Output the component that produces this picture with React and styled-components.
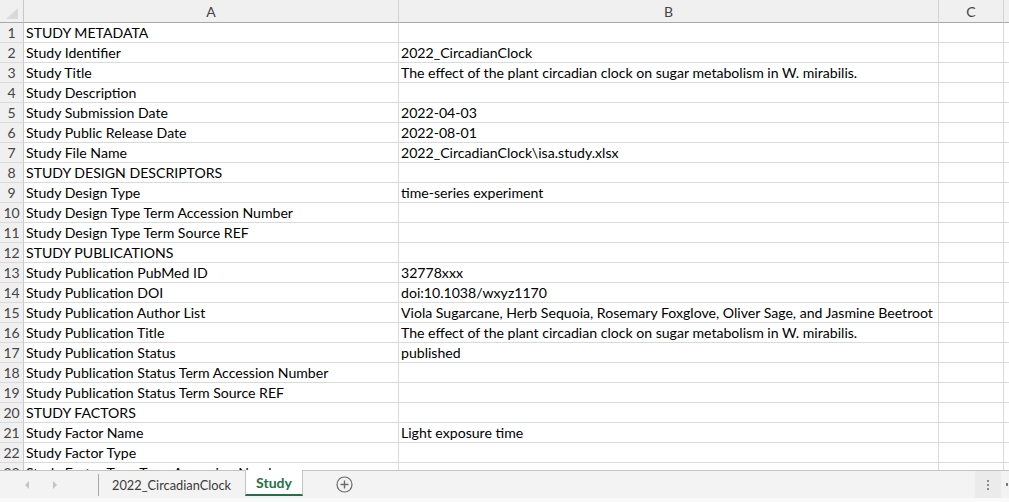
import styled, { createGlobalStyle } from 'styled-components';

const GlobalStyle = createGlobalStyle`
  html, body {
    margin: 0;
    padding: 0;
    background: #ffffff;
  }
  body {
    font-family: 'Lato', 'Liberation Sans', sans-serif;
  }
`;

const columns = ['A', 'B', 'C', ''];

const rows = [
  ['STUDY METADATA', ''],
  ['Study Identifier', '2022_CircadianClock'],
  ['Study Title', 'The effect of the plant circadian clock on sugar metabolism in W. mirabilis.'],
  ['Study Description', ''],
  ['Study Submission Date', '2022-04-03'],
  ['Study Public Release Date', '2022-08-01'],
  ['Study File Name', '2022_CircadianClock\\isa.study.xlsx'],
  ['STUDY DESIGN DESCRIPTORS', ''],
  ['Study Design Type', 'time-series experiment'],
  ['Study Design Type Term Accession Number', ''],
  ['Study Design Type Term Source REF', ''],
  ['STUDY PUBLICATIONS', ''],
  ['Study Publication PubMed ID', '32778xxx'],
  ['Study Publication DOI', 'doi:10.1038/wxyz1170'],
  ['Study Publication Author List', 'Viola Sugarcane, Herb Sequoia, Rosemary Foxglove, Oliver Sage, and Jasmine Beetroot'],
  ['Study Publication Title', 'The effect of the plant circadian clock on sugar metabolism in W. mirabilis.'],
  ['Study Publication Status', 'published'],
  ['Study Publication Status Term Accession Number', ''],
  ['Study Publication Status Term Source REF', ''],
  ['STUDY FACTORS', ''],
  ['Study Factor Name', 'Light exposure time'],
  ['Study Factor Type', ''],
  ['Study Factor Type Term Accession Number', ''],
];

export default function App() {
  return (
    <>
      <GlobalStyle />
      <Window>
        <SheetArea>
          <Grid>
            <Corner>
              <CornerMark />
            </Corner>
            {columns.map((c, i) => (
              <ColHeader key={'h' + i}>{c}</ColHeader>
            ))}
            {rows.map((r, i) => (
              <Row key={i} n={i + 1} a={r[0]} b={r[1]} />
            ))}
          </Grid>
        </SheetArea>
        <TabBar>
          <NavArrows>
            <Arrow viewBox="0 0 6 10"><path d="M5 1 L1 5 L5 9 Z" /></Arrow>
            <Arrow viewBox="0 0 6 10"><path d="M1 1 L5 5 L1 9 Z" /></Arrow>
          </NavArrows>
          <Divider />
          <Tab>2022_CircadianClock</Tab>
          <Tab active>Study</Tab>
          <AddButton>
            <svg width="17" height="17" viewBox="0 0 17 17">
              <circle cx="8.5" cy="8.5" r="7.5" fill="none" stroke="#6b6b6b" strokeWidth="1.2" />
              <path d="M8.5 4.5 V12.5 M4.5 8.5 H12.5" stroke="#6b6b6b" strokeWidth="1.4" />
            </svg>
          </AddButton>
          <Spacer />
          <MoreButton>
            <Dot />
            <Dot />
            <Dot />
          </MoreButton>
          <EdgeMark />
        </TabBar>
        <StatusStrip />
      </Window>
    </>
  );
}

function Row({ n, a, b }) {
  return (
    <>
      <RowHeader>{n}</RowHeader>
      <Cell>{a}</Cell>
      <Cell>{b}</Cell>
      <Cell />
      <Cell />
    </>
  );
}

const Window = styled.div`
  width: 1009px;
  height: 502px;
  display: flex;
  flex-direction: column;
  overflow: hidden;
`;

const SheetArea = styled.div`
  flex: 1;
  overflow: hidden;
  background: #ffffff;
`;

const Grid = styled.div`
  display: grid;
  grid-template-columns: 24px 375px 540px 65px 20px;
  grid-auto-rows: 20px;
  grid-template-rows: 23px;
`;

const Corner = styled.div`
  position: relative;
  background: #f0f0f0;
  border-right: 1px solid #c8c8c8;
  border-bottom: 1px solid #a9a9a9;
  box-sizing: border-box;
`;

const CornerMark = styled.div`
  position: absolute;
  right: 5px;
  bottom: 3px;
  width: 0;
  height: 0;
  border-left: 12px solid transparent;
  border-bottom: 11px solid #d9d9d9;
`;

const ColHeader = styled.div`
  background: #f0f0f0;
  border-right: 1px solid #d4d4d4;
  border-bottom: 1px solid #a9a9a9;
  box-sizing: border-box;
  display: flex;
  align-items: center;
  justify-content: center;
  color: #444444;
  font-family: 'Lato', 'Liberation Sans', sans-serif;
  font-size: 14px;
  padding-top: 1px;
`;

const RowHeader = styled.div`
  background: #f0f0f0;
  border-right: 1px solid #c8c8c8;
  border-bottom: 1px solid #dadada;
  box-sizing: border-box;
  display: flex;
  align-items: center;
  justify-content: center;
  color: #444444;
  font-family: 'Lato', 'Liberation Sans', sans-serif;
  font-size: 14px;
`;

const Cell = styled.div`
  border-right: 1px solid #dadada;
  border-bottom: 1px solid #dadada;
  box-sizing: border-box;
  padding: 0 0 0 2px;
  display: flex;
  align-items: center;
  white-space: nowrap;
  overflow: hidden;
  color: #000000;
  font-family: 'Lato', 'Liberation Sans', sans-serif;
  font-size: 14.1px;
`;

const TabBar = styled.div`
  height: 28px;
  flex-shrink: 0;
  box-sizing: border-box;
  border-top: 1px solid #c2c2c2;
  background: #f3f3f3;
  display: flex;
  align-items: stretch;
`;

const NavArrows = styled.div`
  width: 98px;
  display: flex;
  align-items: center;
  padding-left: 24px;
  gap: 22px;
  box-sizing: border-box;
`;

const Arrow = styled.svg`
  width: 6px;
  height: 10px;
  fill: #c4c4c4;
`;

const Divider = styled.div`
  width: 1px;
  margin: 3px 0 2px;
  background: #a6a6a6;
`;

const Tab = styled.div`
  display: flex;
  align-items: center;
  padding: ${(p) => (p.active ? '0 10px' : '0 14px 0 13px')};
  box-sizing: border-box;
  font-family: 'Lato', 'Liberation Sans', sans-serif;
  font-size: ${(p) => (p.active ? '14px' : '12.8px')};
  font-weight: ${(p) => (p.active ? 700 : 400)};
  color: ${(p) => (p.active ? '#217346' : '#3a3a3a')};
  background: ${(p) => (p.active ? '#ffffff' : 'transparent')};
  border-left: ${(p) => (p.active ? '1px solid #c2c2c2' : 'none')};
  border-right: ${(p) => (p.active ? '1px solid #c2c2c2' : 'none')};
  border-bottom: ${(p) => (p.active ? '2px solid #217346' : 'none')};
  margin-top: ${(p) => (p.active ? '-1px' : '0')};
  margin-bottom: ${(p) => (p.active ? '2px' : '0')};
`;

const AddButton = styled.div`
  display: flex;
  align-items: center;
  padding-left: 33px;
`;

const Spacer = styled.div`
  flex: 1;
`;

const MoreButton = styled.div`
  width: 26px;
  margin-right: 5px;
  background: #ebebeb;
  display: flex;
  flex-direction: column;
  align-items: center;
  justify-content: center;
  gap: 2px;
`;

const Dot = styled.div`
  width: 2px;
  height: 2px;
  background: #8a8a8a;
`;

const EdgeMark = styled.div`
  width: 2px;
  height: 3px;
  align-self: center;
  background: #7a7a7a;
  margin-right: 1px;
`;

const StatusStrip = styled.div`
  height: 4px;
  flex-shrink: 0;
  background: #fafafa;
`;
